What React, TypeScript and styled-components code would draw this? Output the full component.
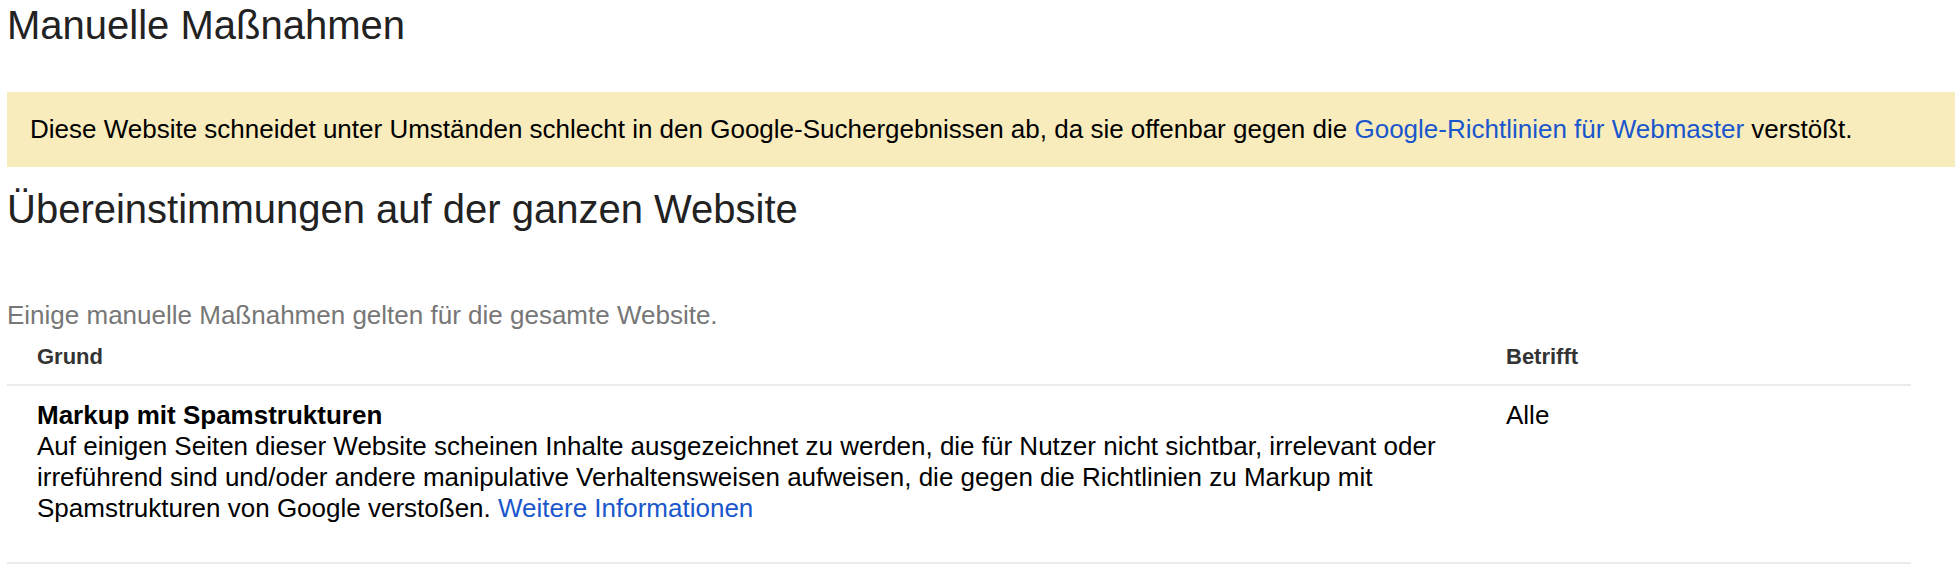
import React from 'react'
import styled, { createGlobalStyle } from 'styled-components'

const GlobalStyle = createGlobalStyle`
	html, body {
		margin: 0;
		padding: 0;
		background: #fff;
	}
	body {
		font-family: "Liberation Sans", Arial, Helvetica, sans-serif;
		color: #222;
	}
`

const Page = styled.div`
	padding: 2px 5px 0 7px;
`

const Title = styled.h1`
	margin: 0;
	font-size: 40px;
	line-height: 46px;
	font-weight: normal;
	color: #222;
`

const Banner = styled.div`
	margin-top: 44px;
	padding: 22px 23px;
	background: #f9ecbc;
	font-size: 26px;
	line-height: 31px;
	color: #000;
`

const Link = styled.a`
	color: #1a56cc;
	text-decoration: none;
	cursor: pointer;
`

const SectionTitle = styled.h2`
	margin: 19px 0 0;
	font-size: 40px;
	line-height: 46px;
	font-weight: normal;
	color: #222;
`

const Hint = styled.p`
	margin: 68px 0 0;
	font-size: 26px;
	line-height: 31px;
	color: #777;
`

const Table = styled.table`
	width: 1904px;
	border-collapse: collapse;
	table-layout: fixed;
`

const HeadCell = styled.th`
	padding: 13px 30px 15px;
	text-align: left;
	font-size: 22px;
	line-height: 25px;
	font-weight: bold;
	color: #333;
	border-bottom: 2px solid #ebebeb;
`

const Cell = styled.td`
	padding: 14px 30px 38px;
	vertical-align: top;
	font-size: 26px;
	line-height: 31px;
	color: #000;
	border-bottom: 2px solid #ebebeb;
`

const ReasonTitle = styled.div`
	font-weight: bold;
`

const issues = [
	{
		title: 'Markup mit Spamstrukturen',
		text: 'Auf einigen Seiten dieser Website scheinen Inhalte ausgezeichnet zu werden, die für Nutzer nicht sichtbar, irrelevant oder irreführend sind und/oder andere manipulative Verhaltensweisen aufweisen, die gegen die Richtlinien zu Markup mit Spamstrukturen von Google verstoßen.',
		scope: 'Alle',
	},
]

export default function App() {
	return (
		<Page>
			<GlobalStyle />
			<Title>Manuelle Maßnahmen</Title>
			<Banner>
				Diese Website schneidet unter Umständen schlecht in den Google-Suchergebnissen ab, da sie offenbar gegen die{' '}
				<Link>Google-Richtlinien für Webmaster</Link> verstößt.
			</Banner>
			<SectionTitle>Übereinstimmungen auf der ganzen Website</SectionTitle>
			<Hint>Einige manuelle Maßnahmen gelten für die gesamte Website.</Hint>
			<Table>
				<colgroup>
					<col style={{ width: 1469 }} />
					<col />
				</colgroup>
				<thead>
					<tr>
						<HeadCell>Grund</HeadCell>
						<HeadCell>Betrifft</HeadCell>
					</tr>
				</thead>
				<tbody>
					{issues.map((issue, k) => (
						<tr key={k}>
							<Cell>
								<ReasonTitle>{issue.title}</ReasonTitle>
								{issue.text} <Link>Weitere Informationen</Link>
							</Cell>
							<Cell>{issue.scope}</Cell>
						</tr>
					))}
				</tbody>
			</Table>
		</Page>
	)
}
